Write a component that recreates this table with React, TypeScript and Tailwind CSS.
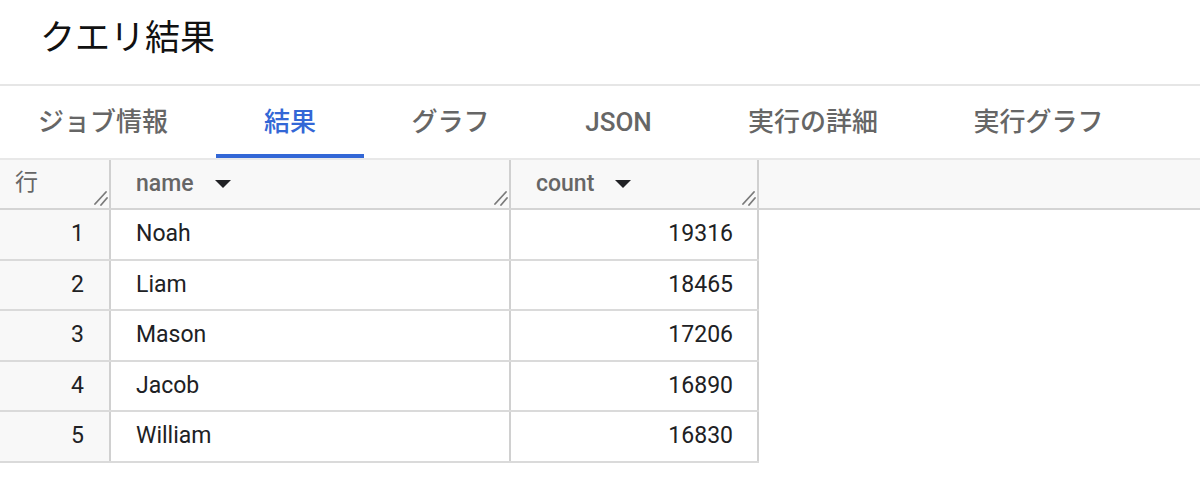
const rows = [
  { n: 1, name: "Noah", count: 19316 },
  { n: 2, name: "Liam", count: 18465 },
  { n: 3, name: "Mason", count: 17206 },
  { n: 4, name: "Jacob", count: 16890 },
  { n: 5, name: "William", count: 16830 },
];

const tabs = [
  { label: "ジョブ情報", w: "w-[216px] pr-[10px]" },
  { label: "結果", w: "w-[148px]", active: true },
  { label: "グラフ", w: "w-[173px]" },
  { label: "JSON", w: "w-[163px]" },
  { label: "実行の詳細", w: "w-[226px]" },
  { label: "実行グラフ", w: "w-[225px]" },
];

function ResizeHandle() {
  return (
    <svg
      className="absolute right-[1px] bottom-[2px]"
      width="16"
      height="16"
      viewBox="0 0 16 16"
    >
      <path
        d="M3 14 L14 2 M9 15 L15 8"
        stroke="#7a7a7a"
        strokeWidth="1.8"
        strokeLinecap="round"
        fill="none"
      />
    </svg>
  );
}

function SortArrow() {
  return (
    <svg width="16" height="8" viewBox="0 0 16 8" className="ml-[21px]">
      <path d="M0 0 L16 0 L8 8 Z" fill="#202124" />
    </svg>
  );
}

export default function App() {
  return (
    <div className="w-[1200px] h-[478px] overflow-hidden bg-white font-['Roboto','Noto_Sans_CJK_JP',sans-serif] text-[#202124]">
      {/* Title */}
      <div className="h-[84px] pl-[40px] pt-[13px]">
        <h1 className="text-[35px] leading-[44px] font-normal font-['Noto_Sans_CJK_JP',sans-serif] text-[#111]">
          クエリ結果
        </h1>
      </div>
      <div className="h-[2px] bg-[#e6e6e6]" />

      {/* Tabs */}
      <div className="flex h-[72px]">
        {tabs.map((t) => (
          <div
            key={t.label}
            className={`relative flex shrink-0 items-center justify-center text-[26px] font-medium ${t.w} ${
              t.active ? "text-[#3367d6]" : "text-[#666666]"
            }`}
          >
            {t.label}
            {t.active && (
              <span className="absolute bottom-0 left-0 right-0 h-[4px] bg-[#3367d6]" />
            )}
          </div>
        ))}
      </div>

      {/* Table */}
      <div className="border-t-2 border-[#e8e8e8]">
        <div className="flex h-[50px] border-b-2 border-[#d4d4d4] bg-[#f8f8f8] text-[23px] font-medium text-[#666666]">
          <div className="relative flex w-[111px] shrink-0 items-center border-r-2 border-[#d0d0d0] pl-[15px] pb-[2px] font-normal">
            行
            <ResizeHandle />
          </div>
          <div className="relative flex w-[400px] shrink-0 items-center border-r-2 border-[#d0d0d0] pl-[25px]">
            name
            <SortArrow />
            <ResizeHandle />
          </div>
          <div className="relative flex w-[248px] shrink-0 items-center border-r-2 border-[#d0d0d0] pl-[25px]">
            count
            <SortArrow />
            <ResizeHandle />
          </div>
          <div className="flex-1" />
        </div>

        {rows.map((r) => (
          <div
            key={r.n}
            className="flex h-[50.5px] w-[759px] border-b-2 border-[#dadada] text-[23px]"
          >
            <div className="flex w-[111px] shrink-0 items-center justify-end border-r-2 border-[#d0d0d0] bg-[#f8f8f8] pr-[25px]">
              {r.n}
            </div>
            <div className="flex w-[400px] shrink-0 items-center border-r-2 border-[#d0d0d0] pl-[25px]">
              {r.name}
            </div>
            <div className="flex w-[248px] shrink-0 items-center justify-end border-r-2 border-[#d0d0d0] pr-[24px]">
              {r.count}
            </div>
          </div>
        ))}
      </div>
    </div>
  );
}
